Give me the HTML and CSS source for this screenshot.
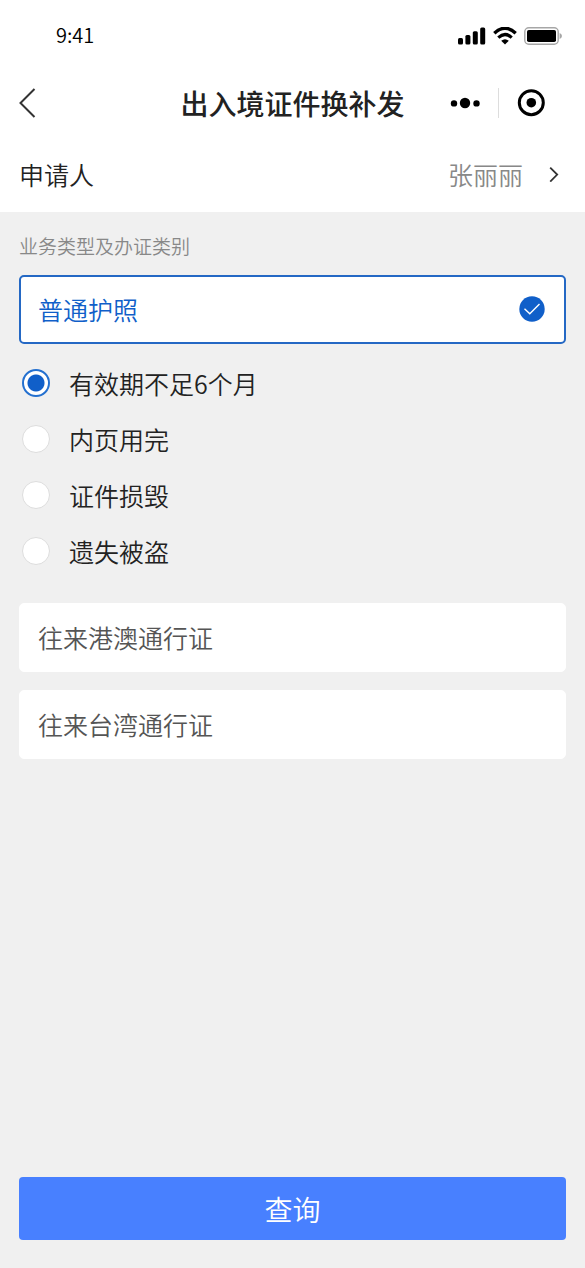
FILE: index.html
```html
<!DOCTYPE html>
<html lang="zh-CN">
<head>
<meta charset="utf-8">
<meta name="viewport" content="width=device-width, initial-scale=1">
<title>出入境证件换补发</title>
<link rel="stylesheet" href="styles.css">
</head>
<body>
<form class="page">
  <header class="top">
    <div class="status">
      <time class="clock">9:41</time>
      <div class="indicators">
        <svg width="28" height="18" viewBox="0 0 28 18" aria-hidden="true">
          <rect x="0" y="11" width="5" height="6.4" rx="1.5"/>
          <rect x="7.4" y="8" width="5" height="9.4" rx="1.5"/>
          <rect x="14.8" y="4.2" width="5" height="13.2" rx="1.5"/>
          <rect x="22.2" y="0.5" width="5" height="16.9" rx="1.5"/>
        </svg>
        <svg width="24" height="18" viewBox="0 0 24 18" aria-hidden="true">
          <path d="M1.3 6.2Q12-3.6 22.7 6.2" fill="none" stroke="#000" stroke-width="3.4"/>
          <path d="M5.3 10.6Q12 4.4 18.7 10.6" fill="none" stroke="#000" stroke-width="3.2"/>
          <path d="M8.2 13.7Q12 10.7 15.8 13.7L12 17.6Z"/>
        </svg>
        <svg width="38" height="18" viewBox="0 0 38 18" aria-hidden="true">
          <rect x="0.8" y="0.8" width="33.4" height="16.4" rx="4" fill="none" stroke="#a6a6a6" stroke-width="1.4"/>
          <rect x="3" y="3" width="29" height="12" rx="1.8"/>
          <path d="M35.6 6Q38 7 38 9T35.6 12Z" fill="#a6a6a6"/>
        </svg>
      </div>
    </div>
    <nav class="nav">
      <button class="icon-button back" type="button" aria-label="返回">
        <svg width="18" height="30" viewBox="0 0 18 30" aria-hidden="true"><path d="M15.5 1L1.5 15L15.5 29" fill="none" stroke="#333" stroke-width="2"/></svg>
      </button>
      <h1 class="title">出入境证件换补发</h1>
      <div class="capsule">
        <button class="icon-button" type="button" aria-label="更多">
          <svg width="30" height="12" viewBox="0 0 30 12" aria-hidden="true"><circle cx="4" cy="6.4" r="3.2"/><circle cx="15" cy="6" r="5.2"/><circle cx="26.5" cy="6.4" r="3.2"/></svg>
        </button>
        <span class="divider"></span>
        <button class="icon-button" type="button" aria-label="关闭">
          <svg width="28" height="28" viewBox="0 0 28 28" aria-hidden="true"><circle cx="14.3" cy="13.7" r="12" fill="none" stroke="#000" stroke-width="3"/><circle cx="14.3" cy="13.7" r="4.8"/></svg>
        </button>
      </div>
    </nav>
    <button class="applicant" type="button">
      <span>申请人</span>
      <span class="applicant-name">张丽丽</span>
      <svg width="10" height="16" viewBox="0 0 10 16" aria-hidden="true"><path d="M1.2 1.6L8.2 8.6L1.2 15.6" fill="none" stroke="#333" stroke-width="1.8"/></svg>
    </button>
  </header>

  <main class="content">
    <h2 class="caption">业务类型及办证类别</h2>
    <label class="card">
      <span>普通护照</span>
      <input class="card-input" type="radio" name="document" checked>
      <svg class="card-check" width="26" height="26" viewBox="0 0 26 26" aria-hidden="true"><circle cx="13" cy="13" r="12.7" fill="#105fc9"/><path d="M5.5 12.7L10.8 17.7L20.5 8" fill="none" stroke="#fff" stroke-width="1.4"/></svg>
    </label>
    <div class="reasons" role="radiogroup" aria-label="换补发原因">
      <label class="reason"><input class="radio" type="radio" name="reason" checked><span>有效期不足6个月</span></label>
      <label class="reason"><input class="radio" type="radio" name="reason"><span>内页用完</span></label>
      <label class="reason"><input class="radio" type="radio" name="reason"><span>证件损毁</span></label>
      <label class="reason"><input class="radio" type="radio" name="reason"><span>遗失被盗</span></label>
    </div>
    <div class="others">
      <label class="card"><span>往来港澳通行证</span><input class="card-input" type="radio" name="document"></label>
      <label class="card"><span>往来台湾通行证</span><input class="card-input" type="radio" name="document"></label>
    </div>
  </main>

  <footer class="footer">
    <button class="submit" type="submit">查询</button>
  </footer>
</form>
</body>
</html>
```
FILE: styles.css
```css
* {
  box-sizing: border-box;
}

body {
  margin: 0;
  background: #f0f0f0;
  color: #222;
  font-family: "Noto Sans CJK SC", sans-serif;
  font-size: 25px;
  font-weight: 350;
  line-height: 36px;
}

button {
  margin: 0;
  padding: 0;
  border: 0;
  background: none;
  color: inherit;
  font: inherit;
  cursor: pointer;
}

svg {
  display: block;
  flex: none;
}

.page {
  display: flex;
  flex-direction: column;
  min-height: 100vh;
}

.top {
  background: #fff;
}

.status {
  display: flex;
  align-items: center;
  justify-content: space-between;
  height: 70px;
  padding: 0 23px 0 56px;
}

.clock {
  color: #000;
  font-size: 20px;
}

.indicators {
  display: flex;
  align-items: center;
  gap: 7px;
  padding-top: 2px;
}

.nav {
  display: grid;
  grid-template-columns: 1fr auto 1fr;
  align-items: center;
  height: 66px;
  padding: 0 19px;
}

.icon-button {
  display: flex;
  align-items: center;
  justify-content: center;
}

.back {
  justify-self: start;
}

.title {
  margin: 0;
  font-size: 28px;
  font-weight: 500;
}

.capsule {
  display: flex;
  align-items: center;
  justify-self: end;
  gap: 18px;
  padding-right: 21px;
}

.divider {
  width: 1px;
  height: 30px;
  background: #ddd;
}

.applicant {
  display: flex;
  align-items: center;
  width: 100%;
  height: 76px;
  padding: 0 26px 0 19px;
}

.applicant-name {
  margin-left: auto;
  margin-right: 26px;
  color: #888;
}

.content {
  flex: 1;
  padding: 20px 19px;
}

.caption {
  margin: 0 0 15px;
  color: #888;
  font-size: 19px;
  font-weight: 350;
  line-height: 28px;
}

.card {
  display: flex;
  align-items: center;
  justify-content: space-between;
  height: 69px;
  padding: 0 19px 2px 18px;
  border: 1px solid #fff;
  border-radius: 5px;
  background: #fff;
  color: #555;
  cursor: pointer;
}

.card:has(:checked) {
  padding-left: 17px;
  border: 2px solid #2468c4;
  color: #105fc9;
}

.card-input {
  appearance: none;
  width: 0;
  height: 0;
  margin: 0 0 0 auto;
}

.reasons {
  display: grid;
  padding: 11px 3px 24px;
}

.reason {
  display: flex;
  align-items: center;
  gap: 19px;
  height: 56px;
  cursor: pointer;
}

.radio {
  appearance: none;
  width: 28px;
  height: 28px;
  margin: 0;
  border: 1px solid #ddd;
  border-radius: 50%;
  background: #fff;
}

.radio:checked {
  border: 2px solid #2470cf;
  background: radial-gradient(circle, #105fc9 8px, #fff 9px);
}

.others {
  display: grid;
  gap: 18px;
}

.footer {
  padding: 0 19px 28px;
}

.submit {
  width: 100%;
  height: 63px;
  border-radius: 4px;
  background: #4880ff;
  color: #fff;
  font-size: 28px;
}
```
